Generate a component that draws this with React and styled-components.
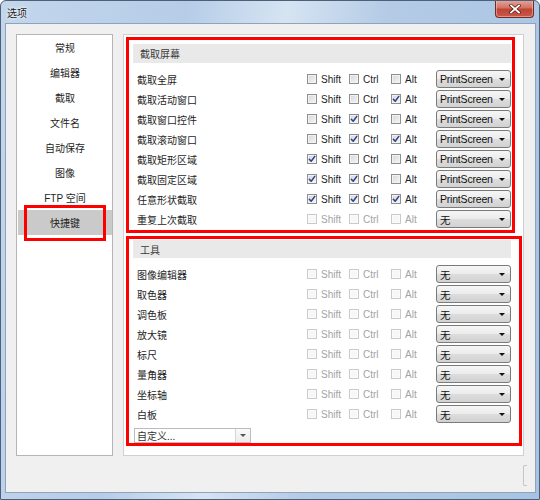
import React from 'react';
import styled, { createGlobalStyle } from 'styled-components';

const GlobalStyle = createGlobalStyle`
  html, body {
    margin: 0;
    padding: 0;
    width: 540px;
    height: 500px;
    overflow: hidden;
    background: #fff;
  }
  body {
    font-family: "Liberation Sans", "Noto Sans CJK SC", sans-serif;
    font-size: 10px;
    color: #1e1e1e;
  }
`;

const Window = styled.div`
  width: 540px;
  height: 500px;
  box-sizing: border-box;
  border: 1px solid #4d6079;
  border-radius: 6px 6px 0 0;
  background: linear-gradient(100deg, #c3d6ec 0%, #b6cde8 30%, #d6e4f2 46%, #b4cbe6 62%, #a7c3e3 100%);
  display: flex;
  flex-direction: column;
  overflow: hidden;
`;

const TitleBar = styled.div`
  height: 22px;
  display: flex;
  align-items: flex-start;
  flex-shrink: 0;
`;

const Title = styled.div`
  font-family: "Noto Sans CJK SC", sans-serif;
  font-size: 10px;
  line-height: 10px;
  color: #1a1a1a;
  margin: 7px 0 0 6px;
  text-shadow: 0 0 4px #fff, 0 0 2px #fff;
`;

const CloseButton = styled.div`
  margin-left: auto;
  margin-right: 5px;
  margin-top: -1px;
  width: 39px;
  height: 18px;
  box-sizing: border-box;
  border: 1px solid #6e2c25;
  border-top: none;
  border-radius: 0 0 4px 4px;
  background: linear-gradient(#e8a89e 0%, #d27265 45%, #bf4434 55%, #c9584a 100%);
  box-shadow: inset 0 0 0 1px rgba(255, 220, 210, 0.45);
  display: flex;
  align-items: center;
  justify-content: center;
`;

const Client = styled.div`
  flex: 1;
  margin: 0 3px 6px 4px;
  border: 1px solid #8fa3bb;
  background: #f0f0f0;
  display: flex;
  flex-direction: column;
  padding: 10px 11px 0 10px;
`;

const Main = styled.div`
  display: flex;
  gap: 10px;
  height: 422px;
`;

const Nav = styled.div`
  width: 97px;
  box-sizing: border-box;
  border: 1px solid #b5b5b5;
  background: #fff;
  display: flex;
  flex-direction: column;
`;

const NavItem = styled.div`
  position: relative;
  height: 25px;
  margin-left: 1px;
  display: flex;
  align-items: center;
  justify-content: center;
  font-family: "Liberation Sans", "Noto Sans CJK SC", sans-serif;
  font-size: 10px;
  color: #1e1e1e;
  background: ${p => (p.$active ? '#cacaca' : 'transparent')};

  &::after {
    content: '';
    display: ${p => (p.$active ? 'block' : 'none')};
    position: absolute;
    left: 6px;
    right: 6px;
    top: -5px;
    bottom: -6px;
    border: 3px solid #ff0000;
  }
`;

const Panel = styled.div`
  width: 401px;
  box-sizing: border-box;
  border: 1px solid #d0d0d0;
  background: #fff;
  display: flex;
  flex-direction: column;
`;

const Section = styled.div`
  box-sizing: border-box;
  border: 3px solid #ff0000;
  margin: ${p => p.$mt}px ${p => p.$mr}px 0 2px;
  display: flex;
  flex-direction: column;
`;

const SectionHeader = styled.div`
  width: 378px;
  height: ${p => p.$h}px;
  margin: ${p => p.$mt}px 0 6px 4px;
  background: #e9e9e9;
  display: flex;
  align-items: center;
  padding-left: 7px;
  box-sizing: border-box;
  font-family: "Noto Sans CJK SC", sans-serif;
  font-size: 10px;
  color: #3a3a3a;
`;

const Row = styled.div`
  height: 20px;
  display: grid;
  grid-template-columns: 170px 42px 42px 45px 75px;
  align-items: center;
  padding-left: 8px;
`;

const Label = styled.div`
  font-family: "Noto Sans CJK SC", sans-serif;
  font-size: 10px;
  color: #1e1e1e;
`;

const Check = styled.div`
  display: flex;
  align-items: center;
  gap: 4px;
  font-size: 10px;
  color: ${p => (p.$disabled ? '#a3a3a3' : '#1e1e1e')};
`;

const Box = styled.div`
  width: 10px;
  height: 10px;
  box-sizing: border-box;
  border: 1px solid ${p => (p.$disabled ? '#cacaca' : '#8e8f8f')};
  background: ${p => (p.$disabled ? '#f7f7f7' : 'linear-gradient(135deg, #d6d6d6, #f6f6f6)')};
  box-shadow: inset 0 0 0 1px ${p => (p.$disabled ? '#fbfbfb' : '#f2f2f2')};
  display: flex;
  align-items: center;
  justify-content: center;
`;

const Select = styled.div`
  height: 18px;
  box-sizing: border-box;
  border: 1px solid #7a7a7a;
  border-radius: 3px;
  background: linear-gradient(#f6f6f6 0%, #ebebeb 50%, #dddddd 51%, #d2d2d2 100%);
  display: flex;
  align-items: center;
  padding: 0 5px 0 3px;
  font-family: "Liberation Sans", "Noto Sans CJK SC", sans-serif;
  font-size: 10.5px;
  letter-spacing: -0.2px;
  color: #111;
`;

const SelectText = styled.span`
  flex: 1;
`;

const Arrow = styled.div`
  width: 0;
  height: 0;
  border-left: 3px solid transparent;
  border-right: 3px solid transparent;
  border-top: 3px solid ${p => p.$color || '#111'};
`;

const Combo = styled.div`
  width: 117px;
  height: 15px;
  margin: 4px 0 0 5px;
  box-sizing: border-box;
  border: 1px solid #b9bcc2;
  background: #fff;
  display: flex;
  align-items: stretch;
  font-family: "Noto Sans CJK SC", sans-serif;
  font-size: 10px;
  color: #333;
`;

const ComboText = styled.div`
  flex: 1;
  display: flex;
  align-items: center;
  padding-left: 2px;
`;

const ComboButton = styled.div`
  width: 14px;
  border-left: 1px solid #d6d6d6;
  background: linear-gradient(#fafafa, #ececec);
  display: flex;
  align-items: center;
  justify-content: center;
`;

const Footer = styled.div`
  flex: 1;
  display: flex;
  justify-content: flex-end;
  padding-top: 9px;
`;

const EdgeButton = styled.div`
  width: 4px;
  height: 21px;
  margin-right: -3px;
  box-sizing: border-box;
  border: 1px solid #c6c6c6;
  border-right: none;
  border-radius: 2px 0 0 2px;
`;

const navItems = ['常规', '编辑器', '截取', '文件名', '自动保存', '图像', 'FTP 空间', '快捷键'];

const screenRows = [
  { label: '截取全屏', keys: [0, 0, 0], value: 'PrintScreen' },
  { label: '截取活动窗口', keys: [0, 0, 1], value: 'PrintScreen' },
  { label: '截取窗口控件', keys: [0, 1, 0], value: 'PrintScreen' },
  { label: '截取滚动窗口', keys: [0, 1, 1], value: 'PrintScreen' },
  { label: '截取矩形区域', keys: [1, 0, 0], value: 'PrintScreen' },
  { label: '截取固定区域', keys: [1, 1, 0], value: 'PrintScreen' },
  { label: '任意形状截取', keys: [1, 1, 1], value: 'PrintScreen' },
  { label: '重复上次截取', keys: [0, 0, 0], value: '无', disabled: true },
];

const toolRows = ['图像编辑器', '取色器', '调色板', '放大镜', '标尺', '量角器', '坐标轴', '白板'].map(label => ({
  label,
  keys: [0, 0, 0],
  value: '无',
  disabled: true,
}));

const modifiers = ['Shift', 'Ctrl', 'Alt'];

const CheckMark = () => (
  <svg width="8" height="8" viewBox="0 0 8 8">
    <path d="M1.3 4.2 L3.2 6.3 L6.8 1.4" fill="none" stroke="#2e418c" strokeWidth="1.5" strokeLinecap="round" strokeLinejoin="round" />
  </svg>
);

const CloseIcon = () => (
  <svg width="12" height="10" viewBox="0 0 12 10">
    <path d="M2 1.5 L10 8.5 M10 1.5 L2 8.5" stroke="#5a1d16" strokeWidth="3.2" strokeLinecap="square" />
    <path d="M2 1.5 L10 8.5 M10 1.5 L2 8.5" stroke="#fff" strokeWidth="1.8" strokeLinecap="square" />
  </svg>
);

const HotkeyRow = ({ row }) => (
  <Row>
    <Label>{row.label}</Label>
    {modifiers.map((m, i) => (
      <Check key={m} $disabled={row.disabled}>
        <Box $disabled={row.disabled}>{row.keys[i] ? <CheckMark /> : null}</Box>
        {m}
      </Check>
    ))}
    <Select>
      <SelectText>{row.value}</SelectText>
      <Arrow />
    </Select>
  </Row>
);

export default function App() {
  return (
    <>
      <GlobalStyle />
      <Window>
        <TitleBar>
          <Title>选项</Title>
          <CloseButton>
            <CloseIcon />
          </CloseButton>
        </TitleBar>
        <Client>
          <Main>
            <Nav>
              {navItems.map(item => (
                <NavItem key={item} $active={item === '快捷键'}>
                  {item}
                </NavItem>
              ))}
            </Nav>
            <Panel>
              <Section $mt={2} $mr={8}>
                <SectionHeader $mt={4} $h={19}>截取屏幕</SectionHeader>
                {screenRows.map(row => (
                  <HotkeyRow key={row.label} row={row} />
                ))}
                <div style={{ height: 1 }} />
              </Section>
              <Section $mt={3} $mr={1}>
                <SectionHeader $mt={1} $h={18}>工具</SectionHeader>
                {toolRows.map(row => (
                  <HotkeyRow key={row.label} row={row} />
                ))}
                <Combo>
                  <ComboText>自定义...</ComboText>
                  <ComboButton>
                    <Arrow $color="#555" />
                  </ComboButton>
                </Combo>
              </Section>
            </Panel>
          </Main>
          <Footer>
            <EdgeButton />
          </Footer>
        </Client>
      </Window>
    </>
  );
}
